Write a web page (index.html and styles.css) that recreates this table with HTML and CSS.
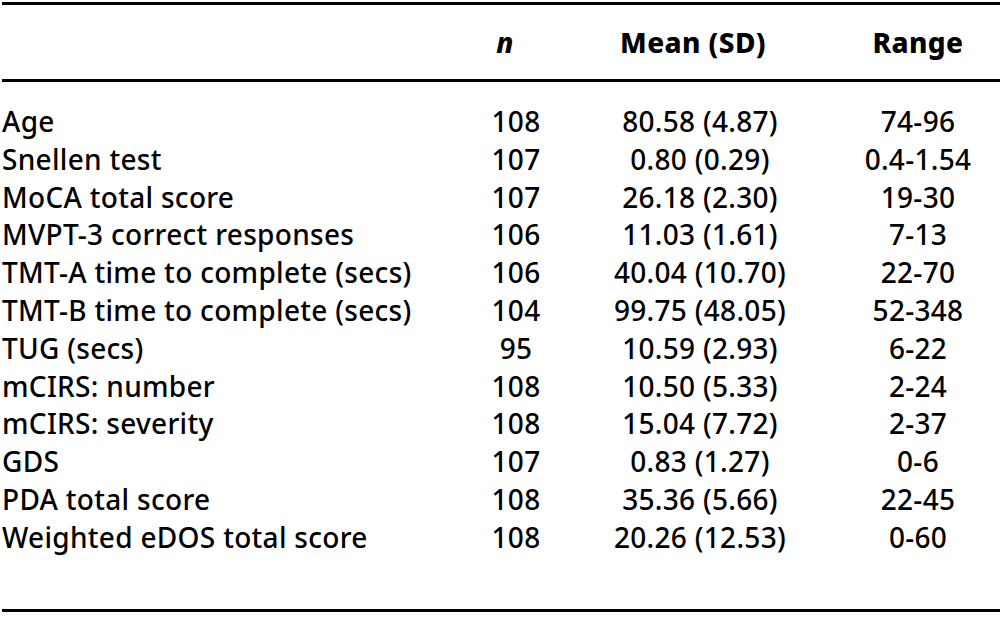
FILE: index.html
```html
<!DOCTYPE html>
<html>
<head>
<meta charset="utf-8">
<link rel="stylesheet" href="styles.css">
</head>
<body>
<div class="table">
  <div class="head">
    <span class="label"></span>
    <span class="c-n"><i>n</i></span>
    <span class="c-mean">Mean (SD)</span>
    <span class="c-range">Range</span>
  </div>
  <div class="body">
    <div class="row"><span class="label">Age</span><span class="c-n">108</span><span class="c-mean">80.58 (4.87)</span><span class="c-range">74-96</span></div>
    <div class="row"><span class="label">Snellen test</span><span class="c-n">107</span><span class="c-mean">0.80 (0.29)</span><span class="c-range">0.4-1.54</span></div>
    <div class="row"><span class="label">MoCA total score</span><span class="c-n">107</span><span class="c-mean">26.18 (2.30)</span><span class="c-range">19-30</span></div>
    <div class="row"><span class="label">MVPT-3 correct responses</span><span class="c-n">106</span><span class="c-mean">11.03 (1.61)</span><span class="c-range">7-13</span></div>
    <div class="row"><span class="label">TMT-A time to complete (secs)</span><span class="c-n">106</span><span class="c-mean">40.04 (10.70)</span><span class="c-range">22-70</span></div>
    <div class="row"><span class="label">TMT-B time to complete (secs)</span><span class="c-n">104</span><span class="c-mean">99.75 (48.05)</span><span class="c-range">52-348</span></div>
    <div class="row"><span class="label">TUG (secs)</span><span class="c-n">95</span><span class="c-mean">10.59 (2.93)</span><span class="c-range">6-22</span></div>
    <div class="row"><span class="label">mCIRS: number</span><span class="c-n">108</span><span class="c-mean">10.50 (5.33)</span><span class="c-range">2-24</span></div>
    <div class="row"><span class="label">mCIRS: severity</span><span class="c-n">108</span><span class="c-mean">15.04 (7.72)</span><span class="c-range">2-37</span></div>
    <div class="row"><span class="label">GDS</span><span class="c-n">107</span><span class="c-mean">0.83 (1.27)</span><span class="c-range">0-6</span></div>
    <div class="row"><span class="label">PDA total score</span><span class="c-n">108</span><span class="c-mean">35.36 (5.66)</span><span class="c-range">22-45</span></div>
    <div class="row"><span class="label">Weighted eDOS total score</span><span class="c-n">108</span><span class="c-mean">20.26 (12.53)</span><span class="c-range">0-60</span></div>
  </div>
</div>
</body>
</html>
```
FILE: styles.css
```css
html, body {
  margin: 0;
  padding: 0;
  background: #fff;
}
body {
  font-family: "Noto Sans", "Liberation Sans", sans-serif;
  color: #000;
  font-size: 28px;
  font-weight: 500;
  letter-spacing: 0.3px;
}
.table {
  margin: 2px 1px 0 2px;
  border-top: 3px solid #000;
  border-bottom: 3px solid #000;
}
.head, .row {
  display: grid;
  grid-template-columns: 440px 148px 220px 1fr;
  align-items: center;
}
.head {
  height: 74px;
  border-bottom: 3px solid #000;
  font-weight: 800;
  letter-spacing: 0.4px;
}
.head .c-n { padding-right: 22px; }
.head .c-mean { padding-right: 14px; }
.body {
  padding: 20px 0 53px;
}
.row {
  height: 37.8px;
}
.c-n, .c-mean, .c-range {
  text-align: center;
}
.c-range { padding-left: 26px; }
```
